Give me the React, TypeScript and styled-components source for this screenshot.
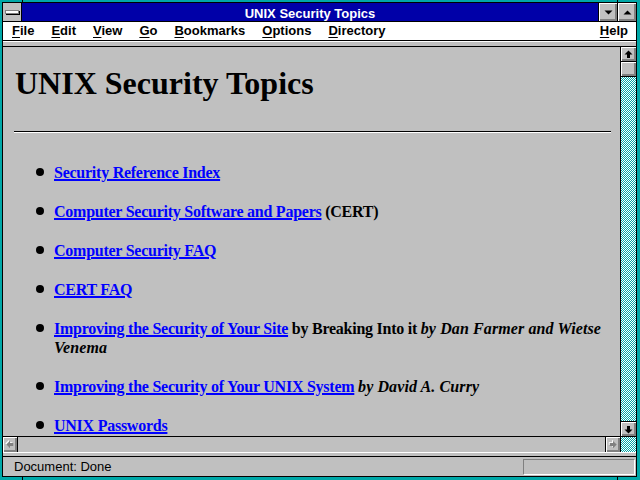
import React from "react";
import styled, { createGlobalStyle, css } from "styled-components";

const TEAL = "#00a8a8";
const FACE = "#c0c0c0";
const SHADOW = "#808080";

const GlobalStyle = createGlobalStyle`
  html, body {
    margin: 0;
    padding: 0;
    width: 640px;
    height: 480px;
    overflow: hidden;
    background: ${TEAL};
  }
`;

const Frame = styled.div`
  position: relative;
  width: 640px;
  height: 480px;
  box-sizing: border-box;
  padding: 2px 3px 3px 2px;
  background: ${TEAL};
`;

// little marks where the resize corners of the frame begin
const FrameTick = styled.span<{ $left: number; $bottom?: boolean }>`
  position: absolute;
  left: ${(p) => p.$left}px;
  width: 1px;
  height: 3px;
  background: #000;
  ${(p) => (p.$bottom ? "bottom: 0;" : "top: 0;")}
`;

const Window = styled.div`
  height: 100%;
  box-sizing: border-box;
  border: 1px solid #000;
  display: flex;
  flex-direction: column;
  background: ${FACE};
  overflow: hidden;
`;

const TitleBar = styled.div`
  display: flex;
  height: 18px;
  border-bottom: 1px solid #000;
  flex: none;
`;

const SysBox = styled.div`
  width: 18px;
  border-right: 1px solid #000;
  background: ${FACE};
  display: flex;
  align-items: center;
  justify-content: center;
`;

const SysBar = styled.div`
  width: 12px;
  height: 2px;
  background: #fff;
  border: 1px solid ${SHADOW};
  box-shadow: 1px 1px 0 #000;
  margin-top: -1px;
`;

const Caption = styled.div`
  flex: 1;
  background: #0000a8;
  color: #fff;
  text-align: center;
  font: bold 13px/21px "Liberation Sans", Arial, sans-serif;
  white-space: nowrap;
  overflow: hidden;
`;

const bevel = css`
  background: ${FACE};
  box-shadow: inset 1px 1px 0 #fff, inset -1px -1px 0 ${SHADOW},
    inset -2px -2px 0 ${SHADOW};
`;

const CaptionButton = styled.div`
  ${bevel};
  width: 18px;
  border-left: 1px solid #000;
  display: flex;
  align-items: center;
  justify-content: center;
`;

const MenuBar = styled.div`
  display: flex;
  gap: 17px;
  height: 18px;
  padding: 0 8px 0 9px;
  background: #fff;
  border-bottom: 1px solid #000;
  font: bold 13px/18px "Liberation Sans", Arial, sans-serif;
  color: #000;
  flex: none;
`;

const MenuItem = styled.span<{ $right?: boolean }>`
  white-space: nowrap;
  ${(p) => p.$right && "margin-left: auto;"}
`;

const Key = styled.span`
  text-decoration: underline;
  text-decoration-thickness: 1px;
  text-underline-offset: 2px;
`;

const ToolStrip = styled.div`
  height: 4px;
  flex: none;
  border-top: 1px solid #fff;
  border-bottom: 1px solid #000;
  background: ${FACE};
`;

const ViewRow = styled.div`
  flex: 1;
  display: flex;
  min-height: 0;
`;

const Content = styled.div`
  flex: 1;
  overflow: hidden;
  padding: 18px 9px 0 11px;
  background: ${FACE};
  color: #000;
  font-family: "Liberation Serif", "Times New Roman", serif;
`;

const Heading = styled.h1`
  margin: 0 0 0 1px;
  font-size: 32px;
  line-height: 36px;
  font-weight: bold;
  white-space: nowrap;
`;

const Rule = styled.hr`
  margin: 30px 0;
  height: 0;
  border: 0;
  border-top: 1px solid #000;
  border-bottom: 1px solid #fff;
`;

const TopicList = styled.ul`
  list-style: none;
  margin: 0;
  padding: 0 0 0 22px;
`;

const Topic = styled.li`
  display: flex;
  margin-bottom: 20px;
  font-size: 16px;
  line-height: 19px;
  font-weight: bold;
  letter-spacing: -0.25px;
`;

const Bullet = styled.span`
  flex: none;
  width: 8px;
  height: 8px;
  border-radius: 50%;
  background: #000;
  margin: 5px 10px 0 0;
`;

const TopicText = styled.span`
  flex: 1;
`;

const Link = styled.a`
  color: #0000ff;
  text-decoration: underline;
  text-decoration-thickness: 2px;
  text-underline-offset: 1px;
`;

const Byline = styled.em`
  font-style: italic;
  letter-spacing: 0.1px;
`;

const dither = css`
  background-color: #fff;
  background-image: repeating-conic-gradient(${TEAL} 0 25%, #fff 0 50%);
  background-size: 2px 2px;
`;

const VScroll = styled.div`
  width: 15px;
  border-left: 1px solid #000;
  display: flex;
  flex-direction: column;
`;

const ScrollButton = styled.div<{ $edge: "top" | "bottom" | "left" | "right" }>`
  ${bevel};
  flex: none;
  width: 15px;
  height: 15px;
  box-sizing: border-box;
  display: flex;
  align-items: center;
  justify-content: center;
  ${(p) => `border-${p.$edge}: 1px solid #000;`}
`;

const Thumb = styled.div`
  ${bevel};
  flex: none;
  height: 14px;
  border-bottom: 1px solid #000;
`;

const Track = styled.div`
  flex: 1;
  ${dither};
`;

const HScroll = styled.div`
  display: flex;
  height: 15px;
  flex: none;
  border-top: 1px solid #000;
`;

const HTrack = styled.div`
  flex: 1;
  background: ${FACE};
`;

const Corner = styled.div`
  width: 15px;
  border-left: 1px solid #000;
  ${dither};
`;

const StatusEdge = styled.div`
  height: 3px;
  flex: none;
  border-top: 1px solid #fff;
  border-bottom: 1px solid #000;
  background: ${FACE};
`;

const StatusBar = styled.div`
  display: flex;
  height: 19px;
  flex: none;
  padding-left: 11px;
  font: 13px/19px "Liberation Sans", Arial, sans-serif;
  color: #000;
`;

const StatusBox = styled.div`
  margin: 2px 1px 0 auto;
  width: 110px;
  height: 14px;
  border: 1px solid;
  border-color: ${SHADOW} #fff #fff ${SHADOW};
`;

const Arrow = ({ dir, disabled }: { dir: "up" | "down" | "left" | "right"; disabled?: boolean }) => {
  const rot = { up: 0, right: 90, down: 180, left: 270 }[dir];
  const pts = "7.5,3.5 11.5,7.5 9,7.5 9,11 6,11 6,7.5 3.5,7.5";
  return (
    <svg width="15" height="15" viewBox="0 0 15 15">
      <g transform={`rotate(${rot} 7.5 7.5)`}>
        {disabled && <polygon points={pts} fill="#fff" transform={dir === "left" ? "translate(1 -1)" : "translate(-1 1)"} />}
        <polygon points={pts} fill={disabled ? SHADOW : "#000"} />
      </g>
    </svg>
  );
};

const Triangle = ({ up }: { up?: boolean }) => (
  <svg width="9" height="5" viewBox="0 0 9 5">
    <polygon points={up ? "4.5,0.5 8.5,4.5 0.5,4.5" : "0.5,0.5 8.5,0.5 4.5,4.5"} fill="#000" />
  </svg>
);

const menus = [
  ["F", "ile"],
  ["E", "dit"],
  ["V", "iew"],
  ["G", "o"],
  ["B", "ookmarks"],
  ["O", "ptions"],
  ["D", "irectory"],
];

export default function App() {
  return (
    <Frame>
      <GlobalStyle />
      <Window>
        <TitleBar>
          <SysBox>
            <SysBar />
          </SysBox>
          <Caption>UNIX Security Topics</Caption>
          <CaptionButton>
            <Triangle />
          </CaptionButton>
          <CaptionButton>
            <Triangle up />
          </CaptionButton>
        </TitleBar>

        <MenuBar>
          {menus.map(([k, rest]) => (
            <MenuItem key={k + rest}>
              <Key>{k}</Key>
              {rest}
            </MenuItem>
          ))}
          <MenuItem $right>
            <Key>H</Key>elp
          </MenuItem>
        </MenuBar>
        <ToolStrip />

        <ViewRow>
          <Content>
            <Heading>UNIX Security Topics</Heading>
            <Rule />
            <TopicList>
              <Topic>
                <Bullet />
                <TopicText>
                  <Link href="#">Security Reference Index</Link>
                </TopicText>
              </Topic>
              <Topic>
                <Bullet />
                <TopicText>
                  <Link href="#">Computer Security Software and Papers</Link> (CERT)
                </TopicText>
              </Topic>
              <Topic>
                <Bullet />
                <TopicText>
                  <Link href="#">Computer Security FAQ</Link>
                </TopicText>
              </Topic>
              <Topic>
                <Bullet />
                <TopicText>
                  <Link href="#">CERT FAQ</Link>
                </TopicText>
              </Topic>
              <Topic>
                <Bullet />
                <TopicText>
                  <Link href="#">Improving the Security of Your Site</Link> by Breaking Into it{" "}
                  <Byline>by Dan Farmer and Wietse Venema</Byline>
                </TopicText>
              </Topic>
              <Topic>
                <Bullet />
                <TopicText>
                  <Link href="#">Improving the Security of Your UNIX System</Link>{" "}
                  <Byline>by David A. Curry</Byline>
                </TopicText>
              </Topic>
              <Topic>
                <Bullet />
                <TopicText>
                  <Link href="#">UNIX Passwords</Link>
                </TopicText>
              </Topic>
            </TopicList>
          </Content>
          <VScroll>
            <ScrollButton $edge="bottom">
              <Arrow dir="up" />
            </ScrollButton>
            <Thumb />
            <Track />
            <ScrollButton $edge="top">
              <Arrow dir="down" />
            </ScrollButton>
          </VScroll>
        </ViewRow>

        <HScroll>
          <ScrollButton $edge="right">
            <Arrow dir="left" disabled />
          </ScrollButton>
          <HTrack />
          <ScrollButton $edge="left">
            <Arrow dir="right" disabled />
          </ScrollButton>
          <Corner />
        </HScroll>
        <StatusEdge />
        <StatusBar>
          Document: Done
          <StatusBox />
        </StatusBar>
      </Window>
      <FrameTick $left={22} />
      <FrameTick $left={617} />
      <FrameTick $left={22} $bottom />
      <FrameTick $left={617} $bottom />
    </Frame>
  );
}
